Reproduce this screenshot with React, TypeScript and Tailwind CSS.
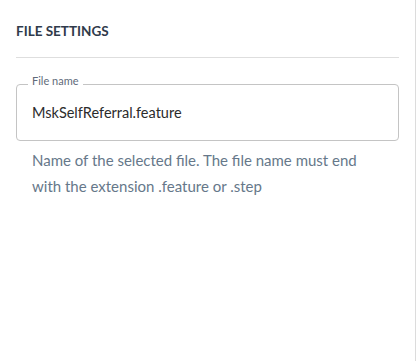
export default function App() {
  return (
    <div className="flex h-[361px] w-[417px] bg-white font-['Lato',sans-serif]">
      <div className="flex w-[416px] flex-col border-r border-[#dcdcdc] px-4">
        <h2 className="pt-[23px] pb-[18px] text-[13.5px] font-bold leading-[16px] text-[#2f3a4a]">
          FILE SETTINGS
        </h2>
        <div className="border-t border-[#dedede]" />
        <label className="relative mt-[26px] block">
          <span className="absolute -top-[10px] left-[12px] bg-white px-[4px] text-[11px] leading-[14px] text-[#5f6b7a]">
            File name
          </span>
          <input
            readOnly
            value="MskSelfReferral.feature"
            className="h-[57px] w-full rounded-[4px] border border-[#c4c4c4] pl-[15px] text-[14.5px] text-[#2b2b2b] outline-none"
          />
        </label>
        <p className="mt-[6px] px-4 text-[15px] leading-[26px] text-[#66788a]">
          Name of the selected file. The file name must end with the extension .feature or .step
        </p>
      </div>
    </div>
  );
}
